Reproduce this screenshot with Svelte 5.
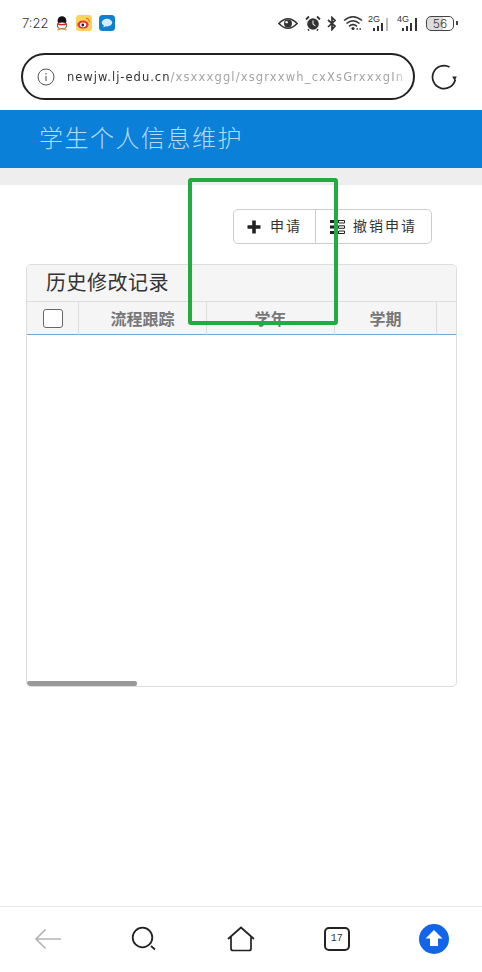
<script>
  const columns = [
    { title: "流程跟踪", width: 128 },
    { title: "学年", width: 128 },
    { title: "学期", width: 102 },
    { title: "", width: 60 }
  ];
</script>

<div class="phone">
  <div class="status">
    <div class="status-left">
      <span class="time">7:22</span>
      <svg class="app" viewBox="0 0 14 15" width="14" height="15">
        <ellipse cx="7" cy="5" rx="4.400" ry="4.800" fill="#111" />
        <ellipse cx="7" cy="9.500" rx="4.600" ry="3.400" fill="#f4f4f4" stroke="#222" stroke-width=".8" />
        <path d="M2.600 7q4.400 2 8.800 0l.3 1.400q-4.700 1.800-9.400 0z" fill="#e02020" />
        <path d="M2.500 14l3-1.400M11.500 14l-3-1.400" stroke="#e8a020" stroke-width="1.800" />
      </svg>
      <svg class="app" viewBox="0 0 16 16" width="16" height="16">
        <rect width="16" height="16" rx="3.500" fill="#fbd25c" />
        <ellipse cx="7" cy="9.600" rx="5.600" ry="4" fill="#e8362c" />
        <ellipse cx="7" cy="9.800" rx="3.200" ry="2.400" fill="#fff" />
        <circle cx="6.800" cy="10" r="1.400" fill="#222" />
        <path d="M10 3.400a3.400 3.400 0 0 1 3.400 3.800" fill="none" stroke="#e87a20" stroke-width="1.200" />
      </svg>
      <svg class="app" viewBox="0 0 16 16" width="16" height="16">
        <rect width="16" height="16" rx="3.500" fill="#0f80cf" />
        <ellipse cx="8" cy="7.600" rx="5.200" ry="3.800" fill="#d4ecfa" />
        <path d="M5 10l-.6 2.600 3-1.600z" fill="#d4ecfa" />
      </svg>
    </div>
    <div class="status-right">
      <svg class="eye" viewBox="0 0 22 14" width="20" height="13">
        <path d="M1 7q10-10.500 20 0q-10 10.500-20 0z" fill="none" stroke="#333" stroke-width="1.800" />
        <circle cx="11" cy="7" r="4.400" fill="#333" />
        <circle cx="9.500" cy="5.500" r="1.300" fill="#fff" />
      </svg>
      <svg viewBox="0 0 16 16" width="16" height="16">
        <circle cx="8" cy="9" r="5.800" fill="#333" />
        <path d="M8 5.500v3.800l2.500 1.500" fill="none" stroke="#fff" stroke-width="1" />
        <path d="M1 4.500l3-3M15 4.500l-3-3M4 14.500l-1 1M12 14.500l1 1" stroke="#333" stroke-width="1.800" />
      </svg>
      <svg viewBox="0 0 10 15" width="10" height="15">
        <path d="M1 4l7 6-3 3.500V1.500l3 3L1 11" fill="none" stroke="#333" stroke-width="1.700" />
      </svg>
      <svg viewBox="0 0 20 16" width="20" height="16">
        <path d="M1 5.500q9-7.500 18 0M3.500 8.500q6.500-5.500 13 0M6 11.300q4-3.300 8 0" fill="none" stroke="#333" stroke-width="1.500" />
        <circle cx="10" cy="13.500" r="1.600" fill="#333" />
        <path d="M13.500 14h1.500M16.500 14h1.500" stroke="#333" stroke-width="1.500" />
      </svg>
      <div class="signal first">
        <span class="net">2G</span>
        <svg viewBox="0 0 17 13" width="17" height="13">
          <path d="M1 13v-3M5 13V8M9 13V5" stroke="#333" stroke-width="2" />
          <path d="M14 13V0" stroke="#bbb" stroke-width="2" />
        </svg>
      </div>
      <div class="signal second">
        <span class="net">4G</span>
        <svg viewBox="0 0 17 13" width="17" height="13">
          <path d="M1 13v-3M5 13V8M9 13V5M14 13V0" stroke="#333" stroke-width="2" />
        </svg>
      </div>
      <div class="battery"><span class="level">56</span></div>
      <span class="nub"></span>
    </div>
  </div>

  <div class="address">
    <div class="url">
      <svg class="info" viewBox="0 0 18 18" width="18" height="18">
        <circle cx="9" cy="9" r="8" fill="none" stroke="#555" stroke-width="1" />
        <path d="M9 8v5M9 5v1.400" stroke="#555" stroke-width="1.100" />
      </svg>
      <span class="url-text"><span class="host">newjw.lj-edu.cn</span><span class="path">/xsxxxggl/xsgrxxwh_cxXsGrxxxgIn</span></span>
    </div>
    <svg class="reload" viewBox="0 0 26 26" width="26" height="26">
      <path d="M24.300 15.500A11.500 11.500 0 1 1 18.500 3" fill="none" stroke="#222" stroke-width="1.700" />
      <path d="M21.200 12.500h4.600l-2.200 4.200z" fill="#222" />
    </svg>
  </div>

  <header class="banner">学生个人信息维护</header>
  <div class="band"></div>

  <main class="content">
    <div class="toolbar">
      <div class="btn-group">
        <button class="btn add">
          <svg viewBox="0 0 14 14" width="14" height="14">
            <path d="M7 .5v13M.5 7h13" stroke="#222" stroke-width="3.600" />
          </svg>
          <span class="label">申请</span>
        </button>
        <button class="btn cancel">
          <svg viewBox="0 0 16 14" width="16" height="14">
            <path d="M0 1.500h9M0 7h9M0 12.500h9" stroke="#222" stroke-width="3" />
            <path d="M9 .5h5.500v2.500H9M9 5.800h5.500v2.500H9M9 11h5.500v2.500H9" fill="none" stroke="#222" stroke-width="1" />
          </svg>
          <span class="label">撤销申请</span>
        </button>
      </div>
    </div>

    <section class="panel">
      <div class="panel-title">历史修改记录</div>
      <div class="grid">
        <table>
          <colgroup>
            <col style="width: 52px" />
            {#each columns as col}
              <col style="width: {col.width}px" />
            {/each}
          </colgroup>
          <thead>
            <tr>
              <th class="check-cell"><span class="checkbox"></span></th>
              {#each columns as col}
                <th>{col.title}</th>
              {/each}
            </tr>
          </thead>
        </table>
        <div class="scrollbar"></div>
      </div>
    </section>
  </main>

  <nav class="bottom">
    <svg viewBox="0 0 28 22" width="28" height="22">
      <path d="M27 11H2M11.500 1.500L2 11l9.500 9.500" fill="none" stroke="#b4b4b4" stroke-width="1.700" />
    </svg>
    <svg viewBox="0 0 26 26" width="26" height="26">
      <circle cx="11.500" cy="11.500" r="9.800" fill="none" stroke="#222" stroke-width="1.800" />
      <path d="M20 20l4 3.500" stroke="#222" stroke-width="1.800" />
    </svg>
    <svg viewBox="0 0 28 26" width="28" height="26">
      <path d="M1 13L14 1.500 27 13M4 11v11.500q0 2 2 2h16q2 0 2-2V11" fill="none" stroke="#222" stroke-width="1.700" />
    </svg>
    <div class="tabs">17</div>
    <svg viewBox="0 0 30 30" width="30" height="30">
      <circle cx="15" cy="15" r="15" fill="#1264e8" />
      <path d="M15 6l8.500 8.500H19V22h-8v-7.500H6.500z" fill="#fff" />
    </svg>
  </nav>

  <!-- annotation drawn over the screenshot -->
  <div class="highlight"></div>
</div>

<style>
  :global(body) {
    margin: 0;
    background: #fff;
  }

  .phone {
    position: relative;
    width: 482px;
    height: 972px;
    display: flex;
    flex-direction: column;
    overflow: hidden;
    background: #fff;
    font-family: "Noto Sans CJK SC", "Liberation Sans", sans-serif;
  }

  .status {
    height: 46px;
    padding: 0 24px 0 22px;
    box-sizing: border-box;
    display: flex;
    align-items: center;
    justify-content: space-between;
    flex: none;
  }

  .status-left {
    display: flex;
    align-items: center;
    gap: 7px;
  }

  .time {
    font-family: "Inter", sans-serif;
    font-size: 13px;
    font-weight: 300;
    color: #333;
  }

  .app {
    display: block;
  }

  .status-right {
    display: flex;
    align-items: center;
    gap: 6px;
  }

  .eye {
    margin-right: 1px;
  }

  .signal {
    position: relative;
    width: 22px;
    height: 15px;
    display: flex;
    align-items: flex-end;
    justify-content: flex-end;
  }

  .signal.first {
    margin-left: -1px;
  }

  .signal.second {
    margin-left: 1px;
  }

  .net {
    position: absolute;
    left: 0;
    top: -1px;
    font-family: "Liberation Sans", sans-serif;
    font-size: 9px;
    color: #333;
    background: #fff;
    line-height: 9px;
  }

  .battery {
    width: 28px;
    height: 15px;
    margin-left: 1px;
    box-sizing: border-box;
    border: 1.200px solid #444;
    border-radius: 5px;
    background: linear-gradient(to right, #dcdcdc 62%, #fff 62%);
    display: flex;
    align-items: center;
    justify-content: center;
  }

  .level {
    font-family: "Inter", sans-serif;
    font-size: 12px;
    font-weight: 300;
    color: #333;
  }

  .nub {
    width: 2px;
    height: 4px;
    margin-left: -4px;
    background: #444;
  }

  .address {
    height: 64px;
    padding: 7px 0 10px 21px;
    box-sizing: border-box;
    display: flex;
    align-items: center;
    flex: none;
  }

  .url {
    width: 394px;
    height: 47px;
    box-sizing: border-box;
    border: 2px solid #222;
    border-radius: 24px;
    padding: 0 5px 0 14px;
    display: flex;
    align-items: center;
    gap: 12px;
  }

  .info {
    flex: none;
  }

  .url-text {
    font-family: "DejaVu Sans", sans-serif;
    font-size: 11.500px;
    white-space: nowrap;
    mask-image: linear-gradient(to right, #000 97%, rgba(0, 0, 0, .4));
  }

  .host {
    color: #333;
    letter-spacing: 1px;
  }

  .path {
    color: #a4a4a4;
    letter-spacing: 1.150px;
  }

  .reload {
    margin-left: 16px;
    flex: none;
  }

  .banner {
    height: 58px;
    flex: none;
    background: #0a80d8;
    color: #b5dcf5;
    font-size: 24px;
    font-weight: 300;
    letter-spacing: 1.500px;
    line-height: 54px;
    padding-left: 39px;
  }

  .band {
    height: 17px;
    flex: none;
    background: #eeeeee;
  }

  .content {
    flex: 1;
    padding: 24px 25px 0 26px;
    box-sizing: border-box;
  }

  .toolbar {
    display: flex;
    justify-content: flex-end;
    margin-right: 25px;
    margin-bottom: 20px;
  }

  .btn-group {
    display: flex;
    height: 35px;
    box-sizing: border-box;
    border: 1px solid #ccc;
    border-radius: 5px;
    background: #fff;
  }

  .btn {
    all: unset;
    display: flex;
    align-items: center;
    justify-content: center;
    gap: 9px;
    font-size: 14px;
    letter-spacing: 2px;
    color: #333;
  }

  .label {
    margin-top: -3px;
  }

  .add {
    width: 81px;
    border-right: 1px solid #ccc;
  }

  .cancel {
    width: 115px;
    gap: 7px;
  }

  .panel {
    height: 423px;
    box-sizing: border-box;
    border: 1px solid #ddd;
    border-radius: 5px;
    overflow: hidden;
    display: flex;
    flex-direction: column;
  }

  .panel-title {
    height: 37px;
    flex: none;
    box-sizing: border-box;
    background: #f5f5f5;
    border-bottom: 1px solid #ddd;
    font-size: 20px;
    letter-spacing: .5px;
    line-height: 33px;
    padding-left: 19px;
    color: #333;
  }

  .grid {
    position: relative;
    flex: 1;
    overflow: hidden;
  }

  table {
    border-collapse: separate;
    border-spacing: 0;
    table-layout: fixed;
    width: 470px;
  }

  th {
    height: 33px;
    padding: 0;
    box-sizing: border-box;
    background: #f5f5f5;
    border-right: 1px solid #ddd;
    border-bottom: 1px solid #6ea8d4;
    font-size: 16px;
    font-weight: 700;
    color: #777;
    text-align: center;
  }

  .check-cell {
    line-height: 0;
  }

  .checkbox {
    display: inline-block;
    width: 18px;
    height: 17px;
    border: 1px solid #666;
    border-radius: 3px;
    background: #fff;
    vertical-align: middle;
  }

  .scrollbar {
    position: absolute;
    left: 0;
    bottom: 0;
    width: 110px;
    height: 5px;
    border-radius: 2px;
    background: #999;
  }

  .bottom {
    height: 66px;
    flex: none;
    box-sizing: border-box;
    border-top: 1px solid #e8e8e8;
    display: flex;
    align-items: center;
    justify-content: space-between;
    padding: 0 33px 1px 34px;
  }

  .tabs {
    width: 22px;
    height: 20px;
    border: 2px solid #222;
    border-radius: 5px;
    font-family: "Liberation Mono", monospace;
    font-size: 10px;
    line-height: 20px;
    text-align: center;
    color: #333;
  }

  .highlight {
    position: absolute;
    left: 188px;
    top: 178px;
    width: 150px;
    height: 147px;
    box-sizing: border-box;
    border: 4px solid #22ab3f;
    border-radius: 3px;
    pointer-events: none;
  }
</style>
